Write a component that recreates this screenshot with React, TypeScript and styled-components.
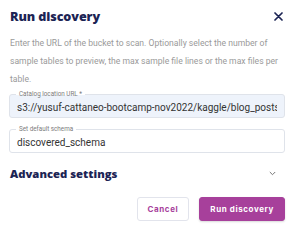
import React from 'react';
import styled, { createGlobalStyle } from 'styled-components';

const GlobalStyle = createGlobalStyle`
  html, body {
    margin: 0;
    padding: 0;
    background: #ffffff;
  }
  body {
    font-family: 'Roboto', 'Liberation Sans', sans-serif;
  }
`;

const colors = {
  navy: '#1c2454',
  gray: '#9a9a9a',
  border: '#dfe3ea',
  fieldBlue: '#eef3fb',
  purple: '#a7409b',
};

const Dialog = styled.div`
  width: 300px;
  height: 242px;
  box-sizing: border-box;
  padding: 4px 15px 0 9px;
  display: flex;
  flex-direction: column;
`;

const Header = styled.div`
  display: flex;
  align-items: center;
  justify-content: space-between;
  height: 24px;
  padding-left: 1px;
`;

const Title = styled.h1`
  margin: 0;
  font-family: 'Open Sans', 'Liberation Sans', sans-serif;
  font-size: 12.6px;
  font-weight: 800;
  letter-spacing: -0.1px;
  color: ${colors.navy};
`;

const CloseButton = styled.button`
  border: none;
  background: none;
  padding: 0;
  margin-right: 1px;
  width: 12px;
  height: 12px;
  display: flex;
  align-items: center;
  justify-content: center;
  cursor: pointer;
`;

const Description = styled.p`
  margin: 6px 0 0 1px;
  max-width: 275px;
  font-family: 'Roboto', 'Liberation Sans', sans-serif;
  font-size: 8.6px;
  line-height: 18px;
  color: ${colors.gray};
`;

const Fields = styled.div`
  display: flex;
  flex-direction: column;
  gap: 11px;
  margin-top: 6px;
`;

const Field = styled.div<{ $filled?: boolean }>`
  position: relative;
  height: 24px;
  box-sizing: border-box;
  padding: 6px 7px 0;
  border: 1px solid ${colors.border};
  border-radius: 3px;
  background: ${(p) => (p.$filled ? colors.fieldBlue : '#ffffff')};
`;

const Label = styled.span<{ $filled?: boolean }>`
  position: absolute;
  top: -4px;
  left: 6px;
  padding: 0 3px;
  font-family: 'Roboto', 'Liberation Sans', sans-serif;
  font-size: 6.3px;
  line-height: 7px;
  color: #7c7c7c;
  background: linear-gradient(
    to bottom,
    #ffffff 0 50%,
    ${(p) => (p.$filled ? colors.fieldBlue : '#ffffff')} 50% 100%
  );
`;

const Value = styled.div`
  font-family: 'Roboto', 'Liberation Sans', sans-serif;
  font-size: 10px;
  line-height: 14px;
  color: #333333;
  white-space: nowrap;
  overflow: hidden;
`;

const Accordion = styled.div`
  display: flex;
  align-items: center;
  justify-content: space-between;
  height: 16px;
  margin-top: 12px;
  padding: 0 9px 0 1px;
`;

const SectionTitle = styled.h2`
  margin: 0;
  font-family: 'Open Sans', 'Liberation Sans', sans-serif;
  font-size: 11.3px;
  font-weight: 800;
  color: ${colors.navy};
`;

const Actions = styled.div`
  display: flex;
  justify-content: flex-end;
  gap: 10px;
  margin-top: 16px;
`;

const Button = styled.button<{ $primary?: boolean }>`
  height: 24px;
  box-sizing: border-box;
  padding: 0 10px;
  border-radius: 3px;
  font-family: 'Inter', 'Liberation Sans', sans-serif;
  font-size: 8px;
  font-weight: 700;
  letter-spacing: 0.6px;
  cursor: pointer;
  border: 1px solid ${(p) => (p.$primary ? colors.purple : '#e2e4ec')};
  background: ${(p) => (p.$primary ? colors.purple : '#ffffff')};
  color: ${(p) => (p.$primary ? '#ffffff' : colors.purple)};
  box-shadow: ${(p) => (p.$primary ? '0 1px 2px rgba(0,0,0,0.15)' : 'none')};
`;

export default function App() {
  return (
    <>
      <GlobalStyle />
      <Dialog>
        <Header>
          <Title>Run discovery</Title>
          <CloseButton aria-label="Close">
            <svg width="9" height="9" viewBox="0 0 9 9">
              <path d="M1 1 L8 8 M8 1 L1 8" stroke={colors.navy} strokeWidth="1.7" strokeLinecap="round" />
            </svg>
          </CloseButton>
        </Header>
        <Description>
          Enter the URL of the bucket to scan. Optionally select the number of sample tables to preview, the max sample file lines or the max files per table.
        </Description>
        <Fields>
          <Field $filled>
            <Label $filled>Catalog location URL *</Label>
            <Value>s3://yusuf-cattaneo-bootcamp-nov2022/kaggle/blog_posts/</Value>
          </Field>
          <Field>
            <Label>Set default schema</Label>
            <Value>discovered_schema</Value>
          </Field>
        </Fields>
        <Accordion>
          <SectionTitle>Advanced settings</SectionTitle>
          <svg width="7" height="5" viewBox="0 0 7 5">
            <path d="M0.8 1 L3.5 3.7 L6.2 1" fill="none" stroke="#777" strokeWidth="1" />
          </svg>
        </Accordion>
        <Actions>
          <Button>Cancel</Button>
          <Button $primary>Run discovery</Button>
        </Actions>
      </Dialog>
    </>
  );
}
